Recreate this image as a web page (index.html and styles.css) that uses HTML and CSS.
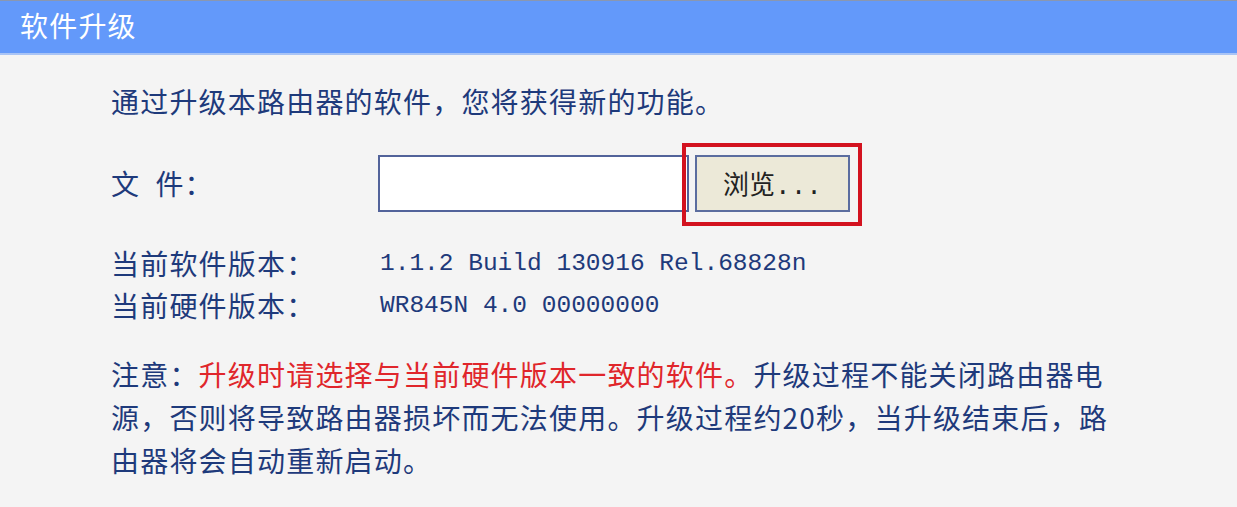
FILE: index.html
```html
<!DOCTYPE html>
<html lang="zh-CN">
<head>
    <meta charset="UTF-8">
    <meta name="viewport" content="width=device-width, initial-scale=1.0">
    <title>软件升级</title>
    <link rel="stylesheet" href="styles.css">
</head>
<body>
    <div class="header">软件升级</div>

    <div class="content">
        <p class="intro">通过升级本路由器的软件，您将获得新的功能。</p>

        <div class="file-row">
            <span class="label">文&ensp;件：</span>
            <input type="text" class="file-input">
            <span class="highlight">
                <button class="btn-browse">浏览...</button>
            </span>
        </div>

        <div class="versions">
            <div class="version-row">
                <span class="label">当前软件版本：</span>
                <span class="value">1.1.2 Build 130916 Rel.68828n</span>
            </div>
            <div class="version-row">
                <span class="label">当前硬件版本：</span>
                <span class="value">WR845N 4.0 00000000</span>
            </div>
        </div>

        <p class="note">注意：<span class="warn">升级时请选择与当前硬件版本一致的软件。</span>升级过程不能关闭路由器电<br>源，否则将导致路由器损坏而无法使用。升级过程约20秒，当升级结束后，路<br>由器将会自动重新启动。</p>
    </div>
</body>
</html>
```

FILE: styles.css
```css
* {
    margin: 0;
    padding: 0;
    box-sizing: border-box;
}

body {
    font-family: "Noto Sans CJK SC", "Noto Sans", sans-serif;
    font-size: 28px;
    letter-spacing: 1.2px;
    background: #f4f4f4;
    color: #1e3a7b;
}

.header {
    height: 55px;
    padding-left: 20px;
    line-height: 48px;
    background: #6399fa;
    border-top: 1px solid #8a97b0;
    border-bottom: 2px solid #a9c4f5;
    color: white;
}

.content {
    padding-left: 111px;
}

.intro {
    margin-top: 26px;
    line-height: 40px;
}

.file-row {
    display: flex;
    align-items: center;
    margin-top: 33px;
    height: 58px;
}

.file-row .label {
    width: 267px;
}

.file-input {
    width: 311px;
    height: 57px;
    border: 2px solid #52639a;
    background: white;
}

.highlight {
    position: relative;
    margin-left: 6px;
    display: flex;
}

/* red annotation frame around the browse button */
.highlight::after {
    content: "";
    position: absolute;
    top: -12px;
    left: -13px;
    right: -12px;
    bottom: -14px;
    border: 4px solid #d3121f;
}

.btn-browse {
    width: 155px;
    height: 57px;
    border: 2px solid #5b6d9f;
    background: #ece9d8;
    color: #222;
    font-family: "Liberation Mono", "Noto Sans CJK SC", monospace;
    font-size: 26px;
    letter-spacing: 0;
}

.versions {
    margin-top: 30px;
}

.version-row {
    display: flex;
    align-items: center;
    height: 42px;
}

.version-row .label {
    width: 269px;
}

.value {
    font-family: "Liberation Mono", monospace;
    font-size: 24.5px;
    letter-spacing: 0;
}

.note {
    margin-top: 27px;
    line-height: 43px;
    white-space: nowrap;
}

.warn {
    color: #e0262b;
}
```
